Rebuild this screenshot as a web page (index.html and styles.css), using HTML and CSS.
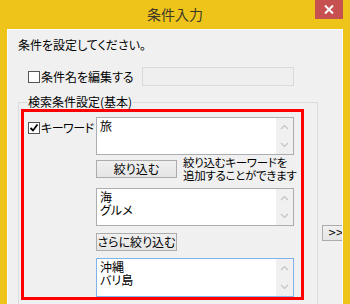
FILE: index.html
```html
<!DOCTYPE html>
<html lang="ja">
<head>
    <meta charset="UTF-8">
    <title>条件入力</title>
    <link rel="stylesheet" href="styles.css">
</head>
<body>

    <div class="window">
        <div class="titlebar">
            <div class="title">条件入力</div>
            <button class="close" type="button">
                <svg width="10" height="9" viewBox="0 0 10 9"><path d="M1 0.5L9 8.5M9 0.5L1 8.5" stroke="#fff" stroke-width="2"/></svg>
            </button>
        </div>

        <div class="content">
            <p class="prompt">条件を設定してください。</p>

            <div class="name-row">
                <label class="check"><span class="box"></span>条件名を編集する</label>
                <div class="name-input"></div>
            </div>

            <div class="lower">
                <fieldset class="group">
                    <legend>検索条件設定(基本)</legend>

                    <!-- 赤枠: キーワード入力部分 -->
                    <div class="highlight">
                        <label class="check keyword">
                            <span class="box"><svg width="10" height="10" viewBox="0 0 10 10"><path d="M1.5 5L4 7.5L8.5 1.5" fill="none" stroke="#000" stroke-width="1.8"/></svg></span>キーワード
                        </label>

                        <div class="fields">
                            <div class="memo">
                                <div class="memo-text">旅</div>
                                <div class="scroll">
                                    <svg width="9" height="6" viewBox="0 0 9 6"><path d="M1 5L4.5 1.5L8 5" fill="none" stroke="#c4c4c4" stroke-width="1.2"/></svg>
                                    <svg width="9" height="6" viewBox="0 0 9 6"><path d="M1 1L4.5 4.5L8 1" fill="none" stroke="#c4c4c4" stroke-width="1.2"/></svg>
                                </div>
                            </div>

                            <div class="refine-row">
                                <button class="btn" type="button">絞り込む</button>
                                <p class="hint">絞り込むキーワードを<br>追加することができます</p>
                            </div>

                            <div class="memo second">
                                <div class="memo-text">海<br>グルメ</div>
                                <div class="scroll">
                                    <svg width="9" height="6" viewBox="0 0 9 6"><path d="M1 5L4.5 1.5L8 5" fill="none" stroke="#c4c4c4" stroke-width="1.2"/></svg>
                                    <svg width="9" height="6" viewBox="0 0 9 6"><path d="M1 1L4.5 4.5L8 1" fill="none" stroke="#c4c4c4" stroke-width="1.2"/></svg>
                                </div>
                            </div>

                            <button class="btn more-refine" type="button">さらに絞り込む</button>

                            <div class="memo focused">
                                <div class="memo-text">沖縄<br>バリ島</div>
                                <div class="scroll">
                                    <svg width="9" height="6" viewBox="0 0 9 6"><path d="M1 5L4.5 1.5L8 5" fill="none" stroke="#c4c4c4" stroke-width="1.2"/></svg>
                                    <svg width="9" height="6" viewBox="0 0 9 6"><path d="M1 1L4.5 4.5L8 1" fill="none" stroke="#c4c4c4" stroke-width="1.2"/></svg>
                                </div>
                            </div>
                        </div>
                    </div>
                </fieldset>

                <button class="expand" type="button">&gt;&gt;</button>
            </div>
        </div>
    </div>

</body>
</html>
```

FILE: styles.css
```css
* {
    margin: 0;
    padding: 0;
    box-sizing: border-box;
}

body {
    width: 350px;
    height: 304px;
    overflow: hidden;
    background: #eec41b;
    font-family: "Noto Sans CJK JP", sans-serif;
    font-size: 12px;
    font-feature-settings: "palt";
    color: #000;
}

.window {
    display: flex;
    flex-direction: column;
    height: 100%;
}

.titlebar {
    display: grid;
    grid-template-columns: 1fr auto 1fr;
    height: 29px;
    flex: none;
}

.title {
    grid-column: 2;
    font-size: 14px;
    line-height: 29px;
    color: #3d3a28;
}

.close {
    grid-column: 3;
    justify-self: end;
    align-self: start;
    width: 28px;
    height: 19px;
    margin-right: 7px;
    border: none;
    background-color: #c75050;
    display: flex;
    align-items: center;
    justify-content: center;
}

.content {
    flex: 1;
    min-height: 0;
    margin: 0 7px;
    padding: 7px 0 0 10px;
    background-color: #f0f0f0;
    border: 1px solid #fafafa;
    border-bottom: none;
    overflow: hidden;
}

.prompt {
    line-height: 15px;
}

.name-row {
    display: grid;
    grid-template-columns: 114px 152px;
    align-items: center;
    height: 19px;
    margin: 15px 0 0 10px;
}

.name-input {
    height: 19px;
    border: 1px solid #d9d9d9;
    background-color: #efefef;
}

.check {
    display: flex;
    align-items: center;
    gap: 1px;
    line-height: 15px;
    white-space: nowrap;
}

.box {
    width: 12px;
    height: 12px;
    flex: none;
    border: 1px solid #555;
    background-color: #fff;
    display: flex;
    align-items: center;
    justify-content: center;
}

.lower {
    display: flex;
    align-items: flex-start;
    margin-top: 9px;
}

.group {
    flex: none;
    width: 300px;
    min-width: 0;
    border: 1px solid #dcdcdc;
    padding: 0 0 10px 2px;
}

.group legend {
    margin-left: 6px;
    padding: 0 1px;
    line-height: 14px;
}

.highlight {
    display: grid;
    grid-template-columns: 72px 198px;
    width: 283px;
    border: 3px solid #ff0000;
    padding-top: 5px;
}

.keyword {
    align-self: start;
    padding-left: 4px;
    margin-top: 3px;
    letter-spacing: -0.5px;
}

.fields {
    display: flex;
    flex-direction: column;
    align-items: flex-start;
}

.memo {
    display: flex;
    flex: none;
    width: 198px;
    height: 38px;
    border: 1px solid #abadb3;
    background-color: #fff;
}

.memo-text {
    flex: 1;
    padding: 1px 3px;
    line-height: 13px;
}

.scroll {
    width: 17px;
    background-color: #f0f0f0;
    display: flex;
    flex-direction: column;
    justify-content: space-between;
    align-items: center;
    padding: 6px 0 6px;
}

.refine-row {
    display: flex;
    align-items: center;
    gap: 6px;
    height: 26px;
    margin-top: 1px;
}

.btn {
    width: 81px;
    height: 18px;
    flex: none;
    border: 1px solid #acacac;
    background: linear-gradient(#f0f0f0, #e5e5e5);
    font: inherit;
    line-height: 16px;
    color: #000;
}

.hint {
    font-size: 11.5px;
    line-height: 13px;
    letter-spacing: -0.3px;
    white-space: nowrap;
}

.memo.second {
    margin-top: 6px;
}

.more-refine {
    margin-top: 7px;
}

.memo.focused {
    height: 39px;
    margin-top: 7px;
    border-color: #7eb4ea;
}

.expand {
    flex: none;
    width: 26px;
    height: 16px;
    margin: 130px 0 0 4px;
    padding-left: 5px;
    border: 1px solid #acacac;
    background: linear-gradient(#f0f0f0, #e5e5e5);
    font-family: "DejaVu Sans", sans-serif;
    font-size: 10px;
    line-height: 14px;
    letter-spacing: -1px;
    text-align: left;
    color: #000;
}
```
